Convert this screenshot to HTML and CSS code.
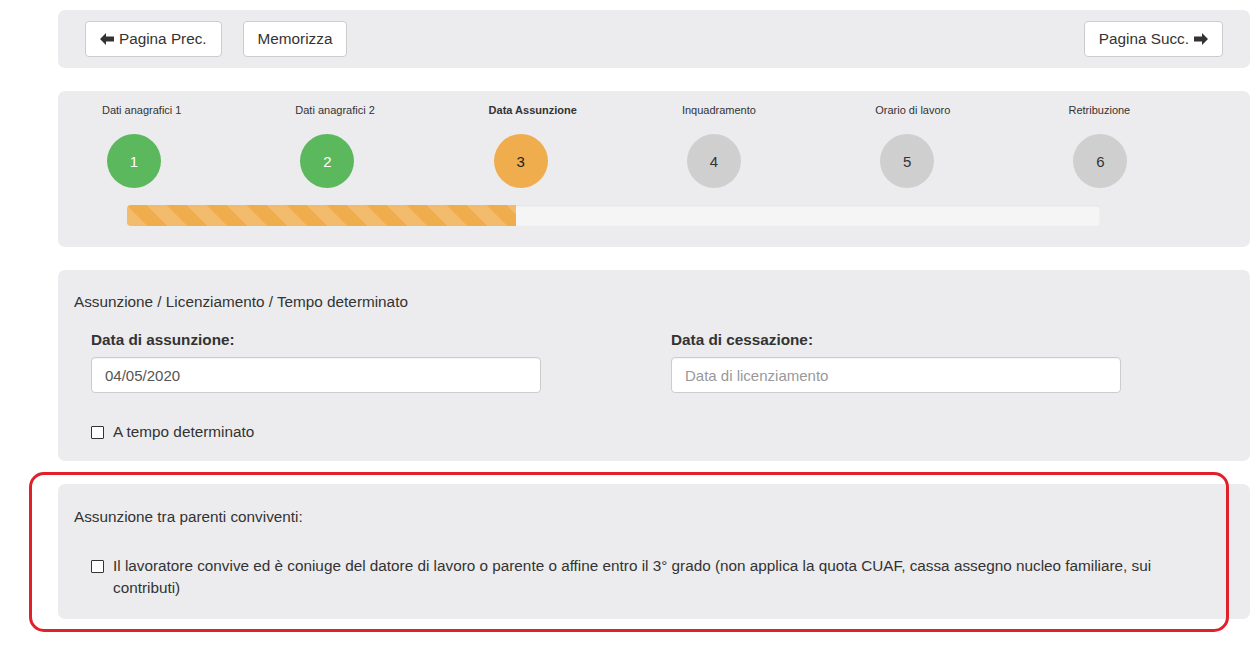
FILE: index.html
```html
<!DOCTYPE html>
<html lang="it">
<head>
<meta charset="utf-8">
<title>Data Assunzione</title>
<link rel="stylesheet" href="styles.css">
</head>
<body>
<div class="page">
  <div class="panel toolbar">
    <div class="btn-group">
      <button class="btn"><svg class="arrow" viewBox="0 0 14 12" width="14" height="12"><path d="M0 6 L6 0 L6 3.5 L14 3.5 L14 8.5 L6 8.5 L6 12 Z" fill="#333"/></svg>Pagina Prec.</button>
      <button class="btn">Memorizza</button>
    </div>
    <button class="btn">Pagina Succ.<svg class="arrow" viewBox="0 0 14 12" width="14" height="12"><path d="M14 6 L8 0 L8 3.5 L0 3.5 L0 8.5 L8 8.5 L8 12 Z" fill="#333"/></svg></button>
  </div>

  <div class="panel steps-panel">
    <div class="steps">
      <div class="step"><div class="step-label">Dati anagrafici 1</div><div class="circle done">1</div></div>
      <div class="step"><div class="step-label">Dati anagrafici 2</div><div class="circle done">2</div></div>
      <div class="step"><div class="step-label current">Data Assunzione</div><div class="circle active">3</div></div>
      <div class="step"><div class="step-label">Inquadramento</div><div class="circle">4</div></div>
      <div class="step"><div class="step-label">Orario di lavoro</div><div class="circle">5</div></div>
      <div class="step"><div class="step-label">Retribuzione</div><div class="circle">6</div></div>
    </div>
    <div class="progress"><div class="progress-bar" style="width:40%"></div></div>
  </div>

  <div class="panel form-panel">
    <div class="section-title">Assunzione / Licenziamento / Tempo determinato</div>
    <div class="fields">
      <div class="field">
        <label class="field-label">Data di assunzione:</label>
        <input class="input" type="text" value="04/05/2020">
      </div>
      <div class="field">
        <label class="field-label">Data di cessazione:</label>
        <input class="input" type="text" placeholder="Data di licenziamento">
      </div>
    </div>
    <label class="check"><input type="checkbox" class="box"><span>A tempo determinato</span></label>
  </div>

  <div class="panel form-panel parenti">
    <div class="section-title">Assunzione tra parenti conviventi:</div>
    <label class="check long"><input type="checkbox" class="box"><span>Il lavoratore convive ed è coniuge del datore di lavoro o parente o affine entro il 3° grado (non applica la quota CUAF, cassa assegno nucleo familiare, sui contributi)</span></label>
  </div>

  <div class="highlight"></div>
</div>
</body>
</html>
```

FILE: styles.css
```css
* { box-sizing: border-box; }
html, body { margin: 0; padding: 0; background: #fff; }
body {
  font-family: "Liberation Sans", Arial, sans-serif;
  font-size: 15.3px;
  color: #333;
}
.page {
  position: relative;
  padding: 10px 1px 41px 58px;
  display: flex;
  flex-direction: column;
  gap: 23px;
  width: 1251px;
}
.panel {
  background: #ececee;
  border-radius: 7px;
}
.toolbar {
  height: 58px;
  padding: 0 27px;
  display: flex;
  align-items: center;
  justify-content: space-between;
}
.btn-group { display: flex; gap: 21px; }
.btn {
  font-family: inherit;
  font-size: 15.3px;
  color: #333;
  background: #fff;
  border: 1px solid #ccc;
  border-radius: 4px;
  height: 36px;
  padding: 0 14px;
  display: inline-flex;
  align-items: center;
  gap: 5px;
  cursor: pointer;
}
.arrow { display: block; }

.steps-panel {
  height: 156px;
  padding: 12px 0 0 44px;
}
.steps {
  display: grid;
  grid-template-columns: repeat(6, 193.3px);
}
.step-label {
  font-size: 11px;
  line-height: 14px;
  height: 14px;
  color: #333;
  white-space: nowrap;
}
.step-label.current { font-weight: bold; }
.circle {
  margin: 17px 0 0 5px;
  width: 54px;
  height: 54px;
  border-radius: 50%;
  background: #cfcfcf;
  color: #333;
  display: flex;
  align-items: center;
  justify-content: center;
  font-size: 15px;
}
.circle.done { background: #5cb85c; color: #fff; }
.circle.active { background: #f0ad4e; color: #222; }
.progress {
  margin: 17px 0 0 25px;
  width: 973px;
  height: 21px;
  background: #f5f5f5;
  border-radius: 4px;
  box-shadow: inset 0 1px 2px rgba(0,0,0,.08);
  overflow: hidden;
}
.progress-bar {
  height: 100%;
  background-color: #f0ad4e;
  background-image: repeating-linear-gradient(45deg, rgba(255,255,255,.17) 0 14.15px, transparent 14.15px 28.3px);
}

.form-panel { padding: 21px 16px 18px 16px; }
.section-title { line-height: 22px; }
.fields {
  display: grid;
  grid-template-columns: 580px 580px;
  padding-left: 17px;
  margin-top: 16px;
}
.field { display: flex; flex-direction: column; }
.field-label { font-weight: bold; line-height: 22px; }
.input {
  margin-top: 6px;
  width: 450px;
  height: 36px;
  border: 1px solid #ccc;
  border-radius: 4px;
  padding: 0 13px;
  font-family: inherit;
  font-size: 15px;
  color: #555;
  background: #fff;
  box-shadow: inset 0 1px 1px rgba(0,0,0,.05);
}
.input::placeholder { color: #999; }
.check {
  display: flex;
  align-items: flex-start;
  gap: 9px;
  padding-left: 17px;
  margin-top: 28px;
  line-height: 22px;
}
.box {
  appearance: none;
  -webkit-appearance: none;
  margin: 5px 0 0 0;
  width: 13px;
  height: 13px;
  flex: none;
  border: 1px solid #333;
  border-radius: 1px;
  background: #fff;
}
.parenti { padding: 22px 60px 20px 16px; }
.parenti .check { margin-top: 27px; }

.highlight {
  position: absolute;
  left: 29px;
  top: 472px;
  width: 1200px;
  height: 160px;
  border: 3px solid #e0202a;
  border-radius: 15px;
  pointer-events: none;
}
```
